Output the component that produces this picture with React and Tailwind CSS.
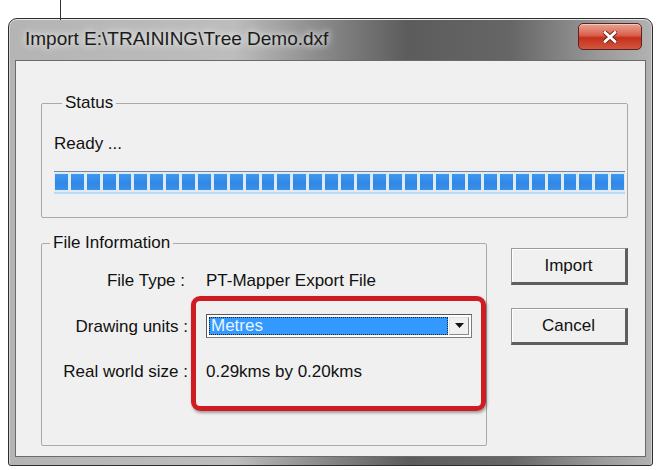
import React from 'react'

const segments = Array.from({ length: 36 })

function GroupBox({ title, className, children }) {
  return (
    <fieldset className={`border border-[#a9a9a9] rounded-[2px] ${className}`}>
      <legend className="ml-[8px] px-[3px] text-[17px] leading-[18px] text-[#111]">{title}</legend>
      {children}
    </fieldset>
  )
}

function Button({ children }) {
  return (
    <button className="w-[117px] h-[37px] bg-[#f0f0f0] border border-[#9a9a9a] border-b-[3px] border-r-[3px] border-b-[#5e5e5e] border-r-[#5e5e5e] shadow-[inset_1px_1px_0_#ffffff] text-[17px] text-[#111]">
      {children}
    </button>
  )
}

export default function App() {
  return (
    <div className="relative w-[661px] h-[470px] bg-white overflow-hidden font-['Liberation_Sans',Arial,sans-serif]">
      <div className="absolute left-[60px] top-0 w-px h-[20px] bg-[#333]" />

      <div className="ml-[8px] pt-[18px] w-[645px]">
        <div className="h-[448px] flex flex-col rounded-t-[9px] rounded-b-[3px] border border-[#2e2e2e] bg-[linear-gradient(90deg,#b4b4b4_0%,#bdbdbd_35%,#8c8c8c_48%,#5c5c5c_62%,#666_78%,#9a9a9a_92%,#b2b2b2_100%)] shadow-[inset_0_1px_0_#e8e8e8,inset_1px_0_0_#d0d0d0,inset_-1px_0_0_#d0d0d0]">
          {/* title bar */}
          <div className="h-[41px] flex items-center justify-between pl-[16px] pr-[10px]">
            <span className="text-[19px] text-[#1b1b1b] [text-shadow:0_0_10px_#e6e6e6,0_0_6px_#e6e6e6]">
              Import E:\TRAINING\Tree Demo.dxf
            </span>
            <div className="mt-[-6px] w-[64px] h-[27px] rounded-[5px] border border-[#5a2320] bg-[linear-gradient(180deg,#e9a393_0%,#d9614c_45%,#c6301c_55%,#d2563e_100%)] shadow-[inset_0_1px_0_#f4c9bd] flex items-center justify-center">
              <svg width="14" height="12" viewBox="0 0 14 12">
                <path d="M2 1.5l10 9M12 1.5l-10 9" stroke="#6a1a10" strokeWidth="4.5" strokeLinecap="round" />
                <path d="M2 1.5l10 9M12 1.5l-10 9" stroke="#ffffff" strokeWidth="3" strokeLinecap="round" />
              </svg>
            </div>
          </div>

          {/* client area */}
          <div className="relative flex-1 mx-[6px] mb-[8px] bg-[#f0f0f0] border border-[#6b6b6b] pt-[33px]">
            <GroupBox title="Status" className="ml-[25px] w-[586px] h-[124px] pl-[12px] pr-[2px]">
              <div className="mt-[23px] text-[17px] leading-[18px] text-[#111]">Ready ...</div>
              <div className="mt-[18px] w-[571px] h-[23px] border-t border-[#7a8a9a] border-b-2 border-b-[#b6dcf7] bg-[#dfeaf3] flex gap-[3px] px-[1px] py-[2px]">
                {segments.map((_, i) => (
                  <div key={i} className="flex-1 bg-[linear-gradient(180deg,#3f97ee_0%,#2f88e6_60%,#3b92ec_100%)]" />
                ))}
              </div>
            </GroupBox>

            <div className="mt-[16px] flex">
              <GroupBox title="File Information" className="ml-[25px] w-[446px] h-[212px]">
                <div className="mt-[16px] grid grid-cols-[146px_1fr] gap-x-[18px] gap-y-[20px] items-center text-[17px] text-[#111]">
                  <span className="text-right pr-[3px]">File Type :</span>
                  <span>PT-Mapper Export File</span>
                  <span className="text-right">Drawing units&nbsp;:</span>
                  <div className="w-[266px] h-[24px] border border-[#7b7b7b] border-t-[#5a5a5a] border-l-[#5a5a5a] bg-white flex p-[2px]">
                    <div className="flex-1 bg-[#3399ff] outline-1 outline-dotted outline-[#222] -outline-offset-1 text-[#eaf4ff] text-[17px] leading-[18px] pl-[2px]">
                      Metres
                    </div>
                    <div className="w-[20px] ml-[1px] bg-[#f0f0f0] border border-[#e0e0e0] border-b-[#8a8a8a] border-r-[#8a8a8a] flex items-center justify-center">
                      <svg width="9" height="6" viewBox="0 0 9 6"><path d="M0 0h9L4.5 5z" fill="#111" /></svg>
                    </div>
                  </div>
                  <span className="text-right">Real world size :</span>
                  <span>0.29kms by 0.20kms</span>
                </div>
              </GroupBox>

              <div className="ml-[24px] mt-[14px] flex flex-col gap-[23px]">
                <Button>Import</Button>
                <Button>Cancel</Button>
              </div>
            </div>

            {/* highlight around the units and size values */}
            <div className="absolute left-[175px] top-[235px] w-[295px] h-[115px] rounded-[9px] border-[5px] border-[#cf1b22] shadow-[1px_2px_3px_rgba(0,0,0,0.35)]" />
          </div>
        </div>
      </div>
    </div>
  )
}
